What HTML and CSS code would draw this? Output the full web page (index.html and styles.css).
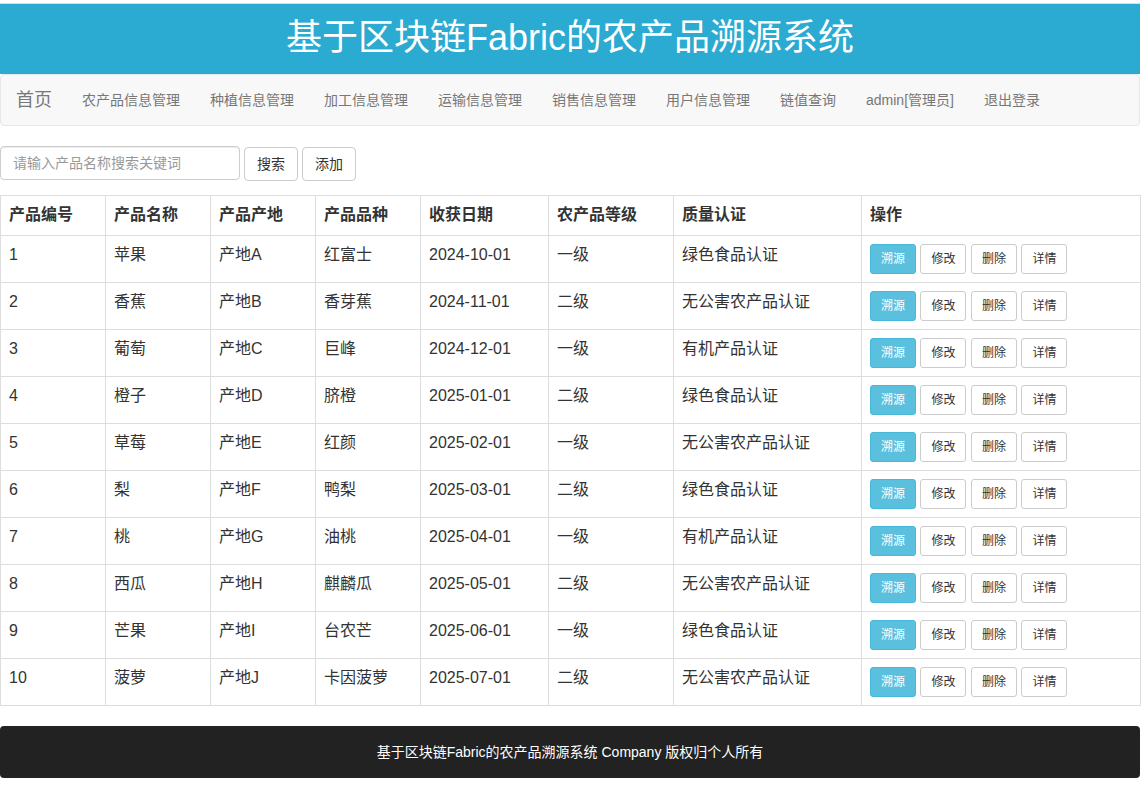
FILE: index.html
```html
<!DOCTYPE html>
<html lang="zh-CN">
<head>
<meta charset="utf-8">
<title>基于区块链Fabric的农产品溯源系统</title>
<link rel="stylesheet" href="styles.css">
</head>
<body>
<div class="page">
  <header class="banner">基于区块链Fabric的农产品溯源系统</header>
  <nav class="navbar">
    <a class="brand" href="#">首页</a>
    <a class="nav-link" href="#">农产品信息管理</a>
    <a class="nav-link" href="#">种植信息管理</a>
    <a class="nav-link" href="#">加工信息管理</a>
    <a class="nav-link" href="#">运输信息管理</a>
    <a class="nav-link" href="#">销售信息管理</a>
    <a class="nav-link" href="#">用户信息管理</a>
    <a class="nav-link" href="#">链值查询</a>
    <a class="nav-link" href="#">admin[管理员]</a>
    <a class="nav-link" href="#">退出登录</a>
  </nav>
  <form class="search">
    <input class="search-input" type="text" placeholder="请输入产品名称搜索关键词">
    <button type="button" class="btn">搜索</button>
    <button type="button" class="btn">添加</button>
  </form>
  <table class="grid">
    <colgroup>
      <col class="c1"><col class="c2"><col class="c3"><col class="c4"><col class="c5"><col class="c6"><col class="c7"><col class="c8">
    </colgroup>
    <thead>
      <tr><th>产品编号</th><th>产品名称</th><th>产品产地</th><th>产品品种</th><th>收获日期</th><th>农产品等级</th><th>质量认证</th><th>操作</th></tr>
    </thead>
    <tbody>
      <tr><td>1</td><td>苹果</td><td>产地A</td><td>红富士</td><td>2024-10-01</td><td>一级</td><td>绿色食品认证</td><td class="ops"><button class="sb info">溯源</button> <button class="sb">修改</button> <button class="sb">删除</button> <button class="sb">详情</button></td></tr>
      <tr><td>2</td><td>香蕉</td><td>产地B</td><td>香芽蕉</td><td>2024-11-01</td><td>二级</td><td>无公害农产品认证</td><td class="ops"><button class="sb info">溯源</button> <button class="sb">修改</button> <button class="sb">删除</button> <button class="sb">详情</button></td></tr>
      <tr><td>3</td><td>葡萄</td><td>产地C</td><td>巨峰</td><td>2024-12-01</td><td>一级</td><td>有机产品认证</td><td class="ops"><button class="sb info">溯源</button> <button class="sb">修改</button> <button class="sb">删除</button> <button class="sb">详情</button></td></tr>
      <tr><td>4</td><td>橙子</td><td>产地D</td><td>脐橙</td><td>2025-01-01</td><td>二级</td><td>绿色食品认证</td><td class="ops"><button class="sb info">溯源</button> <button class="sb">修改</button> <button class="sb">删除</button> <button class="sb">详情</button></td></tr>
      <tr><td>5</td><td>草莓</td><td>产地E</td><td>红颜</td><td>2025-02-01</td><td>一级</td><td>无公害农产品认证</td><td class="ops"><button class="sb info">溯源</button> <button class="sb">修改</button> <button class="sb">删除</button> <button class="sb">详情</button></td></tr>
      <tr><td>6</td><td>梨</td><td>产地F</td><td>鸭梨</td><td>2025-03-01</td><td>二级</td><td>绿色食品认证</td><td class="ops"><button class="sb info">溯源</button> <button class="sb">修改</button> <button class="sb">删除</button> <button class="sb">详情</button></td></tr>
      <tr><td>7</td><td>桃</td><td>产地G</td><td>油桃</td><td>2025-04-01</td><td>一级</td><td>有机产品认证</td><td class="ops"><button class="sb info">溯源</button> <button class="sb">修改</button> <button class="sb">删除</button> <button class="sb">详情</button></td></tr>
      <tr><td>8</td><td>西瓜</td><td>产地H</td><td>麒麟瓜</td><td>2025-05-01</td><td>二级</td><td>无公害农产品认证</td><td class="ops"><button class="sb info">溯源</button> <button class="sb">修改</button> <button class="sb">删除</button> <button class="sb">详情</button></td></tr>
      <tr><td>9</td><td>芒果</td><td>产地I</td><td>台农芒</td><td>2025-06-01</td><td>一级</td><td>绿色食品认证</td><td class="ops"><button class="sb info">溯源</button> <button class="sb">修改</button> <button class="sb">删除</button> <button class="sb">详情</button></td></tr>
      <tr><td>10</td><td>菠萝</td><td>产地J</td><td>卡因菠萝</td><td>2025-07-01</td><td>二级</td><td>无公害农产品认证</td><td class="ops"><button class="sb info">溯源</button> <button class="sb">修改</button> <button class="sb">删除</button> <button class="sb">详情</button></td></tr>
    </tbody>
  </table>
  <footer class="footer">基于区块链Fabric的农产品溯源系统 Company 版权归个人所有</footer>
</div>
</body>
</html>
```
FILE: styles.css
```css
* { box-sizing: border-box; }
html, body { margin: 0; padding: 0; background: #fff; }
body {
  font-family: "Liberation Sans", "Noto Sans CJK SC", sans-serif;
  font-size: 14px;
  line-height: 1.42857;
  color: #333;
  padding-top: 3px;
}
.page { width: 1140px; }
.banner {
  height: 71px;
  border-top: 1px solid #dcdcdc;
  background: #2baad2;
  color: #fff;
  font-size: 36px;
  line-height: 68px;
  text-align: center;
}
.navbar {
  display: flex;
  align-items: center;
  height: 52px;
  background: #f8f8f8;
  border: 1px solid #e7e7e7;
  border-radius: 4px;
  margin-bottom: 20px;
}
.navbar a { text-decoration: none; color: #777; }
.brand {
  font-size: 18px;
  line-height: 20px;
  padding: 15px 15px;
}
.nav-link {
  font-size: 14px;
  line-height: 20px;
  padding: 15px 15px;
}
.search {
  display: flex;
  align-items: center;
  gap: 4px;
  height: 34px;
  margin: 0 0 15px;
}
.search-input {
  width: 240px;
  height: 34px;
  padding: 6px 12px;
  font-family: inherit;
  font-size: 14px;
  color: #555;
  border: 1px solid #ccc;
  border-radius: 4px;
  box-shadow: inset 0 1px 1px rgba(0,0,0,.075);
}
.search-input::placeholder { color: #999; }
.btn {
  height: 34px;
  padding: 6px 12px;
  font-family: inherit;
  font-size: 14px;
  line-height: 20px;
  color: #333;
  background: #fff;
  border: 1px solid #ccc;
  border-radius: 4px;
  position: relative;
  top: 1px;
}
.grid {
  width: 1140px;
  border-collapse: collapse;
  border: 1px solid #ddd;
  table-layout: fixed;
  font-size: 16px;
}
.c1, .c2, .c3, .c4 { width: 105px; }
.c5 { width: 128px; }
.c6 { width: 125px; }
.c7 { width: 188px; }
.c8 { width: 279px; }
.grid th, .grid td {
  border: 1px solid #ddd;
  padding: 8px;
  text-align: left;
  vertical-align: top;
  line-height: 22.86px;
  height: 47px;
}
.grid th { font-weight: bold; height: 39px; vertical-align: middle; }
.grid td.ops { padding: 8px 8px 7px; }
.sb {
  display: inline-block;
  height: 30px;
  padding: 5px 10px;
  font-family: inherit;
  font-size: 12px;
  line-height: 18px;
  color: #333;
  background: #fff;
  border: 1px solid #ccc;
  border-radius: 3px;
  vertical-align: top;
}
.sb.info {
  background: #5bc0de;
  border-color: #46b8da;
  color: #fff;
}
.footer {
  margin-top: 20px;
  height: 52px;
  background: #222;
  color: #fff;
  border-radius: 4px;
  font-size: 14px;
  line-height: 52px;
  text-align: center;
}
```
